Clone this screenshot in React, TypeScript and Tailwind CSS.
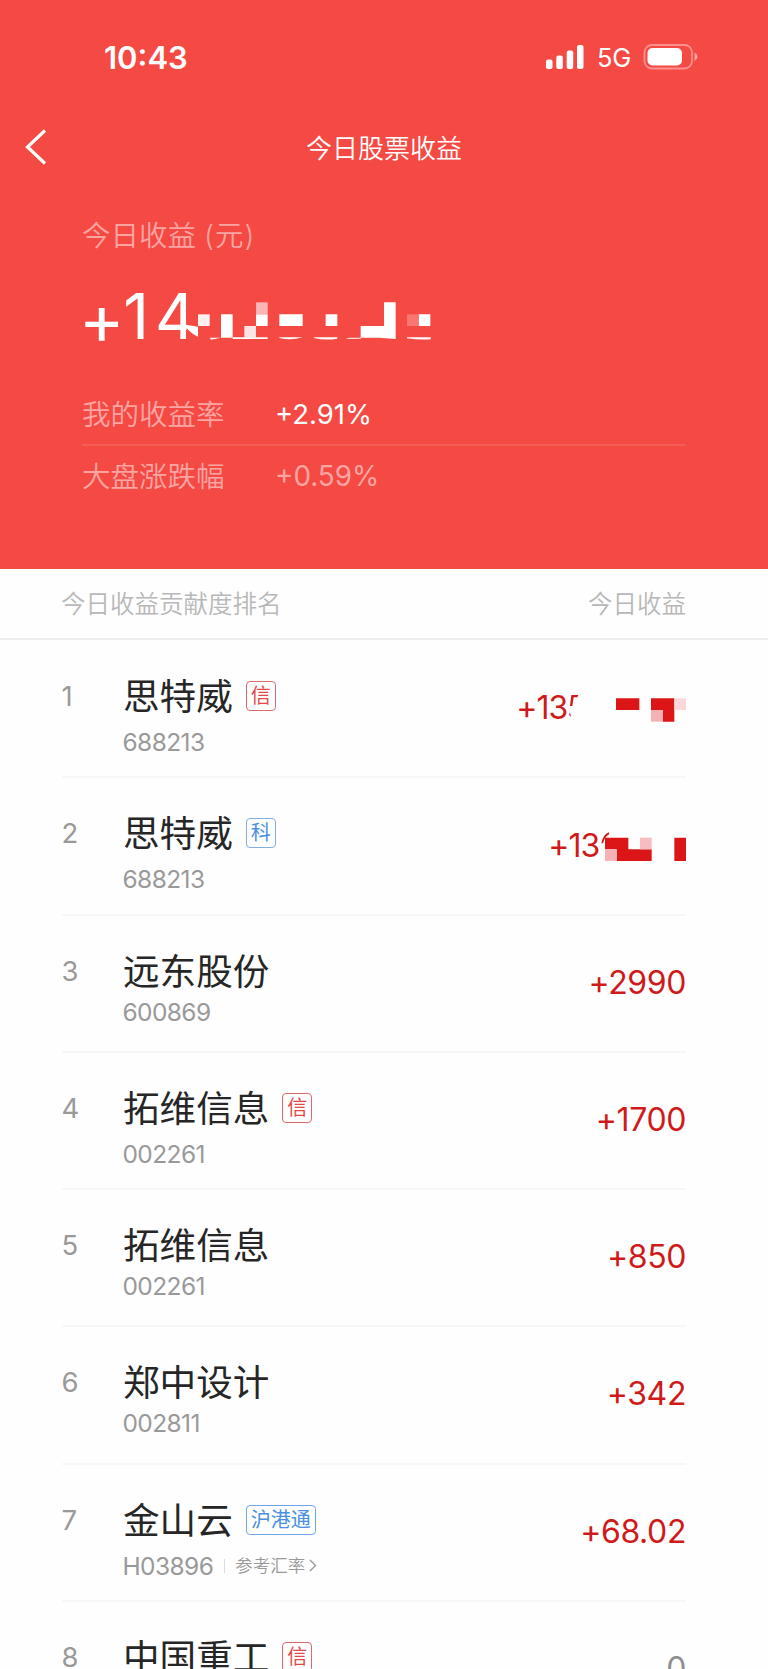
import { ReactNode } from "react";

type Badge = { text: string; tone: "red" | "blue" | "sky" };
type Row = { rank: number; name: string; code: string; badge?: Badge; amount: ReactNode; rate?: boolean };

const tones = {
  red: "border-[#dd6a6a] text-[#e04848]",
  blue: "border-[#84aee0] text-[#4a90e2]",
  sky: "border-[#6fa5e6] text-[#4a90e2]",
};

function Amount({ children, gray }: { children: ReactNode; gray?: boolean }) {
  return (
    <span className={`text-[32px] leading-[40px] tracking-[-0.4px] ${gray ? "text-[#8e8e8e]" : "text-[#d01a1a]"}`}>
      {children}
    </span>
  );
}

function MaskedFirst() {
  return (
    <svg className="block h-[40px] w-[172px] overflow-visible" viewBox="0 0 516 120" role="img">
      <text x="7" y="93" fontSize="96" fill="#d01a1a" letterSpacing="-3">+13</text>
      <path d="M172 21H193L190 28H179L175 54H168ZM166 74L170 79V86L166 82Z" fill="#d01a1a" />
      <path d="M306 31h70v35h-70zM411 31h70v70h-35v-35h-35z" fill="#dc1616" />
      <path d="M411 66h35v35h-35z" fill="#f5b1b4" />
      <path d="M481 31h35v35h-35z" fill="#fad8da" />
    </svg>
  );
}

function MaskedSecond() {
  return (
    <svg className="block h-[40px] w-[142px] overflow-visible" viewBox="0 0 426 120" role="img">
      <text x="13" y="95" fontSize="96" fill="#d01a1a" letterSpacing="-3">+13</text>
      <path d="M172 55Q176 30 194 22L196 27Q181 36 177 55Z" fill="#d01a1a" />
      <path d="M183 38h70v35h70v35h-105v-35h-35zM391 38h35v70h-35z" fill="#dc1616" />
      <path d="M183 73h35v35h-35z" fill="#f5b1b4" />
      <path d="M288 38h35v35h-35z" fill="#f6bcc0" />
    </svg>
  );
}

const rows: Row[] = [
  { rank: 1, name: "思特威", code: "688213", badge: { text: "信", tone: "red" }, amount: <MaskedFirst /> },
  { rank: 2, name: "思特威", code: "688213", badge: { text: "科", tone: "blue" }, amount: <MaskedSecond /> },
  { rank: 3, name: "远东股份", code: "600869", amount: <Amount>+2990</Amount> },
  { rank: 4, name: "拓维信息", code: "002261", badge: { text: "信", tone: "red" }, amount: <Amount>+1700</Amount> },
  { rank: 5, name: "拓维信息", code: "002261", amount: <Amount>+850</Amount> },
  { rank: 6, name: "郑中设计", code: "002811", amount: <Amount>+342</Amount> },
  { rank: 7, name: "金山云", code: "H03896", badge: { text: "沪港通", tone: "sky" }, amount: <Amount>+68.02</Amount>, rate: true },
  { rank: 8, name: "中国重工", code: "", badge: { text: "信", tone: "red" }, amount: <Amount gray>0</Amount> },
];

function StockRow({ row }: { row: Row }) {
  return (
    <li className="ml-[61.5px] mr-[82px] flex h-[137.25px] shrink-0 border-b-2 border-[#f7f7f7]">
      <span className="w-[61.5px] pt-[35px] text-[27.5px] leading-[40px] text-[#999]">{row.rank}</span>
      <div className="flex-1 pt-[34px]">
        <div className="flex h-[44px] items-center gap-[13px]">
          <span className="text-[36.6px] leading-[44px] text-[#262626]">{row.name}</span>
          {row.badge && (
            <span className={`mb-[2px] flex h-[30px] items-center rounded-[4px] border-[1.5px] px-[4px] text-[20px] leading-none ${tones[row.badge.tone]}`}>
              {row.badge.text}
            </span>
          )}
        </div>
        <div className={`-ml-[0.5px] flex items-center text-[24.5px] leading-[30px] tracking-[-0.6px] text-[#999] ${row.badge ? "mt-[8px]" : "mt-[3px]"}`}>
          {row.code}
          {row.rate && (
            <>
              <span className="ml-[11px] mr-[10px] h-[14px] w-px bg-[#ddd]" />
              <span className="text-[17.5px] font-[350] tracking-normal">参考汇率</span>
              <svg className="ml-[4px] h-[13px] w-[8px]" viewBox="0 0 8 13" fill="none" stroke="#999" strokeWidth="1.4">
                <path d="M1 1L6.5 6.5L1 12" />
              </svg>
            </>
          )}
        </div>
      </div>
      <div className="flex items-start pt-[47px]">{row.amount}</div>
    </li>
  );
}

function StatusBar() {
  return (
    <div className="flex h-[114px] items-center justify-between pl-[104px] pr-[70px]">
      <span className="pt-px text-[31px] font-semibold leading-[40px]">10:43</span>
      <div className="flex items-center">
        <svg className="h-[26px] w-[40px]" viewBox="0 0 40 26" fill="#fff">
          <rect x="1" y="15.5" width="6.5" height="9.5" rx="2" />
          <rect x="11.3" y="11.5" width="6.5" height="13.5" rx="2" />
          <rect x="21.7" y="6.5" width="6.5" height="18.5" rx="2" />
          <rect x="32" y="1" width="6.5" height="24" rx="2" />
        </svg>
        <span className="ml-[12px] pt-[2px] text-[25.5px] leading-[30px] tracking-[-0.3px]">5G</span>
        <svg className="ml-[12px] h-[26px] w-[55px]" viewBox="0 0 55 26" fill="none">
          <rect x="1.5" y="1" width="47.5" height="23.5" rx="7.5" stroke="#fff" strokeOpacity=".4" strokeWidth="1.8" />
          <rect x="4.5" y="4" width="34.5" height="17.5" rx="5" fill="#fff" />
          <path d="M51.5 8.5Q54.5 10 54.5 12.7Q54.5 15.5 51.5 17Z" fill="#fff" fillOpacity=".5" />
        </svg>
      </div>
    </div>
  );
}

function MaskedTotal() {
  return (
    <svg className="block h-[64px] w-[360px] overflow-visible" viewBox="60 240 1080 192" role="img">
      <text fontSize="190" fill="#fff" className="font-normal">
        <tspan x="56" y="431" fontSize="208">+</tspan>
        <tspan x="190" y="417">1</tspan>
        <tspan x="285" y="417">4</tspan>
      </text>
      <path d="M380 240h60v190h-60z" fill="#f54944" />
      <path d="M376 374L414 380V410Q395 402 376 380Z" fill="#fff" />
      <path d="M483 343h35v70h-35zM588 343h35v35h-35zM658 343h70v35h-70zM797 343h35v35h-35zM902 378h70v-71h35v110l-50-4h-55zM1076 343h35v35h-35z" fill="#fff" />
      <path d="M414 343h35v35h-35z" fill="#fef0f0" />
      <path d="M588 307h35v36h-35z" fill="#fbb5b4" />
      <path d="M553 378h35v35h-35z" fill="#fde4e4" />
      <path d="M1041 343h35v35h-35z" fill="#fa7673" />
      <path d="M449 413h34l-30 6zM518 412h105v5h-105zM658 412h70q-35 10-70 2zM762 412h70v4q-35 6-70-2zM868 413h34v3h-46zM1041 412h71v6q-35 2-71-3z" fill="#fff" />
    </svg>
  );
}

export default function App() {
  return (
    <main className="flex h-[1669px] w-[768px] flex-col overflow-hidden bg-[#fefefe] font-['Inter','Noto_Sans_CJK_SC',sans-serif]">
      <header className="h-[568.5px] shrink-0 bg-[#f54944] text-white">
        <StatusBar />
        <nav className="grid h-[68px] grid-cols-[80px_1fr_80px] items-center">
          <svg className="mb-[2px] ml-[24px] h-[36px] w-[24px]" viewBox="0 0 24 36" fill="none" stroke="#fff" strokeWidth="3.2">
            <path d="M21 1.5L3.5 18L21 34.5" />
          </svg>
          <h1 className="pt-px text-center text-[26px] font-[350] leading-[36px]">今日股票收益</h1>
        </nav>
        <section className="pl-[82px] pr-[83px] pt-[35px] font-[350]">
          <p className="text-[28.5px] leading-[38px] text-[#fba5a2]">今日收益 <span className="tracking-[1px]">(元)</span></p>
          <div className="-ml-[2px] mt-[25px]"><MaskedTotal /></div>
          <div className="mt-[41px] flex h-[61px] items-center border-b-2 border-[#f65d58] pt-px text-[28.5px]">
            <span className="w-[193px] text-[#fba5a2]">我的收益率</span>
            <span className="text-[27.5px] font-normal">+2.91%</span>
          </div>
          <div className="flex h-[62px] items-center text-[28.5px] text-[#fba5a2]">
            <span className="w-[193px]">大盘涨跌幅</span>
            <span className="text-[27.8px] font-normal">+0.59%</span>
          </div>
        </section>
      </header>
      <div className="flex h-[71px] shrink-0 items-center justify-between border-b-2 border-[#ededed] pl-[61px] pr-[82px] pt-[2px] text-[24.5px] font-[350] text-[#b8b8b8]">
        <span>今日收益贡献度排名</span>
        <span>今日收益</span>
      </div>
      <ul className="pt-[1.5px]">
        {rows.map((row) => <StockRow key={row.rank} row={row} />)}
      </ul>
    </main>
  );
}
